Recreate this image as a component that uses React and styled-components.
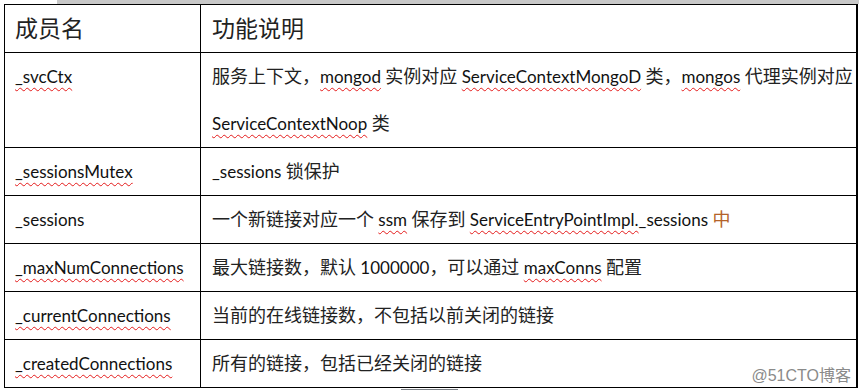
import React from 'react';
import styled, { createGlobalStyle } from 'styled-components';

const GlobalStyle = createGlobalStyle`
  html, body {
    margin: 0;
    padding: 0;
    background: #ffffff;
  }
`;

const Page = styled.div`
  position: relative;
  width: 859px;
  height: 390px;
  overflow: hidden;
  font-family: "Lato", "Noto Sans CJK SC", sans-serif;
  color: #111;
`;

const TopStrip = styled.div`
  margin-left: 57px;
  height: 4px;
  background: #c8c8c8;
`;

const Table = styled.table`
  margin-left: 4px;
  width: 854px;
  border-collapse: collapse;
  table-layout: fixed;
  border: 1px solid #000;
  border-right-width: 2px;
`;

const HeadCell = styled.th`
  box-sizing: border-box;
  border: 1px solid #000;
  padding: 0 0 0 ${(p) => p.$pad || 10}px;
  text-align: left;
  font-weight: 400;
  font-size: 23px;
  line-height: 47px;
  color: #222;
  width: ${(p) => (p.$w ? `${p.$w}px` : 'auto')};
`;

const Cell = styled.td`
  box-sizing: border-box;
  border: 1px solid #000;
  padding: 0 0 0 ${(p) => p.$pad || 10}px;
  font-size: 17px;
  line-height: 47px;
  vertical-align: top;
  white-space: nowrap;
`;

// CJK runs are set a touch larger than the latin words, as in the source doc
const Zh = styled.span`
  font-size: 18px;
  color: ${(p) => p.$color || '#222'};
`;

const Typo = styled.span`
  text-decoration: underline wavy #e41b1b;
  text-decoration-thickness: 1px;
  text-underline-offset: 4px;
  text-decoration-skip-ink: none;
`;

const BottomStrip = styled.div`
  margin: 1px 0 0 401px;
  width: 57px;
  height: 2px;
  background: #7d8288;
`;

const Watermark = styled.div`
  position: absolute;
  right: 8px;
  top: 362px;
  font-family: "Liberation Sans", "Noto Sans CJK SC", sans-serif;
  font-size: 16px;
  color: #8a8a8a;
  text-shadow: 0 0 2px #fff;
`;

const rows = [
  {
    name: <Typo>_svcCtx</Typo>,
    desc: (
      <>
        <Zh>服务上下文，</Zh><Typo>mongod</Typo> <Zh>实例对应</Zh> <Typo>ServiceContextMongoD</Typo> <Zh>类，</Zh>
        <Typo>mongos</Typo> <Zh>代理实例对应</Zh>
        <br />
        <Typo>ServiceContextNoop</Typo> <Zh>类</Zh>
      </>
    ),
  },
  { name: <Typo>_sessionsMutex</Typo>, desc: <>_sessions <Zh>锁保护</Zh></> },
  {
    name: <>_sessions</>,
    desc: (
      <>
        <Zh>一个新链接对应一个</Zh> <Typo>ssm</Typo> <Zh>保存到</Zh> <Typo>ServiceEntryPointImpl.</Typo>_sessions{' '}
        <Zh $color="#b4632a">中</Zh>
      </>
    ),
  },
  {
    name: <Typo>_maxNumConnections</Typo>,
    desc: (
      <>
        <Zh>最大链接数，默认</Zh> 1000000<Zh>，可以通过</Zh> <Typo>maxConns</Typo> <Zh>配置</Zh>
      </>
    ),
  },
  { name: <Typo>_currentConnections</Typo>, desc: <Zh>当前的在线链接数，不包括以前关闭的链接</Zh> },
  { name: <Typo>_createdConnections</Typo>, desc: <Zh>所有的链接，包括已经关闭的链接</Zh> },
];

export default function App() {
  return (
    <Page>
      <GlobalStyle />
      <TopStrip />
      <Table>
        <thead>
          <tr>
            <HeadCell $w={196}>成员名</HeadCell>
            <HeadCell $pad={11}>功能说明</HeadCell>
          </tr>
        </thead>
        <tbody>
          {rows.map((r, i) => (
            <tr key={i}>
              <Cell>{r.name}</Cell>
              <Cell $pad={11}>{r.desc}</Cell>
            </tr>
          ))}
        </tbody>
      </Table>
      <BottomStrip />
      <Watermark>@51CTO博客</Watermark>
    </Page>
  );
}
